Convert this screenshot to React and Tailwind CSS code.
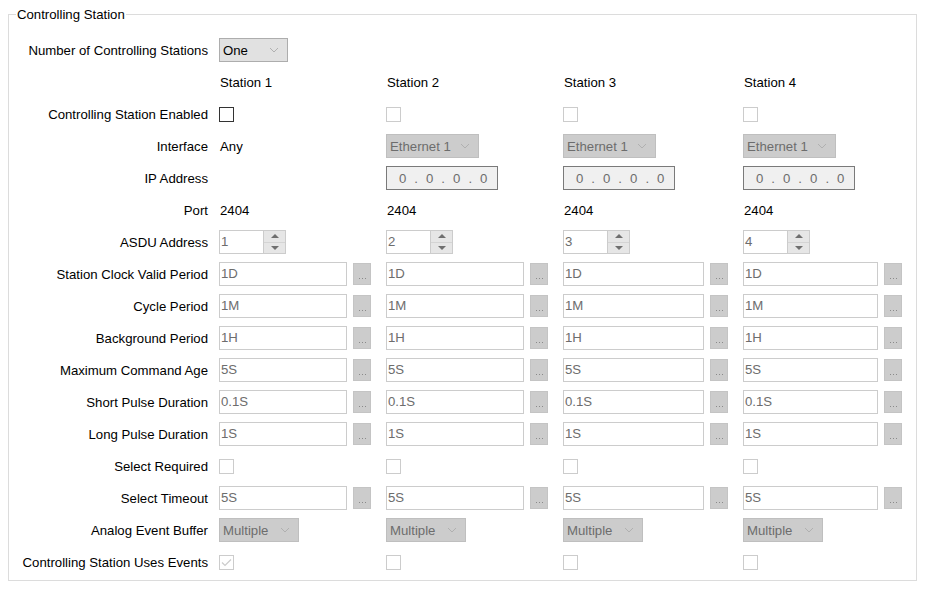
import React from 'react';

const font = { fontFamily: '"Liberation Sans", Arial, sans-serif' };

// column widths and the width of the text field in each column
const cols = [
    { col: 'w-[167px]', field: 'w-[128px]' },
    { col: 'w-[177px]', field: 'w-[138px]' },
    { col: 'w-[180px]', field: 'w-[141px]' },
    { col: 'w-[172px]', field: 'w-[135px]' },
];

const Chevron = () => (
    <svg width="10" height="6" viewBox="0 0 10 6" className="shrink-0">
        <polyline points="1,1 5,5 9,1" fill="none" stroke="#b0b0b0" strokeWidth="1" />
    </svg>
);

const Combo = ({ value, width, enabled }) => (
    <div
        className={`${width} h-[24px] flex items-center justify-between pl-[3px] pr-[8px] border ${
            enabled ? 'bg-[#e1e1e1] border-[#adadad] text-black' : 'bg-[#cccccc] border-[#bfbfbf] text-[#6d6d6d]'
        }`}
    >
        <span>{value}</span>
        <Chevron />
    </div>
);

const Check = ({ enabled, checked }) => (
    <div
        className={`w-[15px] h-[15px] border flex items-center justify-center bg-white ${
            enabled ? 'border-[#333333]' : 'border-[#cccccc]'
        }`}
    >
        {checked && (
            <svg width="11" height="9" viewBox="0 0 11 9">
                <polyline points="1,4.5 4,7.5 10,1.5" fill="none" stroke="#cccccc" strokeWidth="1.2" />
            </svg>
        )}
    </div>
);

const TextField = ({ value, width }) => (
    <div className="flex items-center">
        <div className={`${width} h-[24px] border border-[#cccccc] bg-white pl-[1px] pb-[2px] flex items-center text-[#6d6d6d]`}>
            {value}
        </div>
        <div className="ml-[6px] w-[18px] h-[22px] bg-[#cccccc] border border-[#c4c4c4] flex items-end justify-center gap-[2px] pb-[5px]">
            <span className="w-[1px] h-[1px] bg-[#8a8a8a]" />
            <span className="w-[1px] h-[1px] bg-[#8a8a8a]" />
            <span className="w-[1px] h-[1px] bg-[#8a8a8a]" />
        </div>
    </div>
);

const Spinner = ({ value }) => (
    <div className="w-[67px] h-[24px] border border-[#cccccc] bg-white flex">
        <div className="flex-1 pl-[1px] pb-[2px] flex items-center text-[#6d6d6d]">{value}</div>
        <div className="w-[22px] flex flex-col border-l border-[#cccccc] bg-[#e6e6e6]">
            <div className="flex-1 flex items-center justify-center border-b border-[#d4d4d4]">
                <svg width="8" height="4" viewBox="0 0 8 4">
                    <polygon points="0,4 4,0 8,4" fill="#6f6f6f" />
                </svg>
            </div>
            <div className="flex-1 flex items-center justify-center">
                <svg width="8" height="4" viewBox="0 0 8 4">
                    <polygon points="0,0 8,0 4,4" fill="#6f6f6f" />
                </svg>
            </div>
        </div>
    </div>
);

const IpBox = () => (
    <div className="w-[112px] h-[24px] border border-[#7a7a7a] bg-[#f0f0f0] pl-[12px] flex items-center gap-[8px] text-[#6d6d6d]">
        <span>0</span>
        <span>.</span>
        <span>0</span>
        <span>.</span>
        <span>0</span>
        <span>.</span>
        <span>0</span>
    </div>
);

const Row = ({ label, cells }) => (
    <div className="flex h-[32px] items-center">
        <div className="w-[210px] pr-[11px] text-right text-black">{label}</div>
        {cols.map((c, i) => (
            <div key={i} className={`${c.col} flex items-center`}>
                {cells(i, c)}
            </div>
        ))}
    </div>
);

const durations = [
    ['Station Clock Valid Period', '1D'],
    ['Cycle Period', '1M'],
    ['Background Period', '1H'],
    ['Maximum Command Age', '5S'],
    ['Short Pulse Duration', '0.1S'],
    ['Long Pulse Duration', '1S'],
];

export default function App() {
    return (
        <div className="w-[928px] h-[589px] bg-white text-[13.2px] leading-[15px] pt-[7px]" style={font}>
            <fieldset className="ml-[8px] w-[909px] border border-[#dcdcdc] pt-[12px] pb-[2px]">
                <legend className="ml-[7px] px-[1px] leading-[15px] text-black">Controlling Station</legend>

                <Row label="Number of Controlling Stations" cells={(i) => i === 0 && <Combo value="One" width="w-[69px]" enabled />} />
                <Row label="" cells={(i) => <span className="pl-[1px] text-black">Station {i + 1}</span>} />
                <Row label="Controlling Station Enabled" cells={(i) => <Check enabled={i === 0} />} />
                <Row
                    label="Interface"
                    cells={(i) =>
                        i === 0 ? <span className="pl-[1px] text-black">Any</span> : <Combo value="Ethernet 1" width="w-[93px]" />
                    }
                />
                <Row label="IP Address" cells={(i) => i > 0 && <IpBox />} />
                <Row label="Port" cells={() => <span className="pl-[1px] text-black">2404</span>} />
                <Row label="ASDU Address" cells={(i) => <Spinner value={i + 1} />} />
                {durations.map(([label, value]) => (
                    <Row key={label} label={label} cells={(i, c) => <TextField value={value} width={c.field} />} />
                ))}
                <Row label="Select Required" cells={() => <Check />} />
                <Row label="Select Timeout" cells={(i, c) => <TextField value="5S" width={c.field} />} />
                <Row label="Analog Event Buffer" cells={() => <Combo value="Multiple" width="w-[80px]" />} />
                <Row label="Controlling Station Uses Events" cells={(i) => <Check checked={i === 0} />} />
            </fieldset>
        </div>
    );
}
